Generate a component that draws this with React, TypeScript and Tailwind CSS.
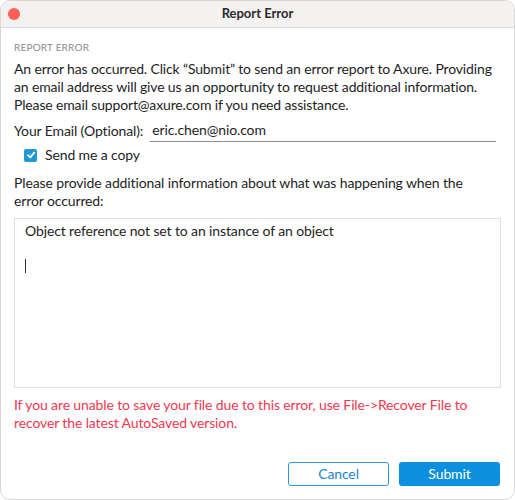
import React from "react";

export default function App() {
  return (
    <div className="w-[515px] h-[500px] bg-white" style={{ fontFamily: "Lato, 'Open Sans', sans-serif" }}>
      <div className="w-[515px] h-[500px] bg-white rounded-[10px] border border-[#d8d8d8] overflow-hidden flex flex-col tracking-[-0.12px]">
        <div className="h-[27px] shrink-0 bg-[#f3f2f1] border-b border-[#dcdcdc] flex items-center relative">
          <div className="absolute left-[7px] top-[7px] w-[12px] h-[12px] rounded-full bg-[#fe5f57]" />
          <div className="w-full text-center text-[13px] font-bold text-[#2b2b2b] tracking-normal">Report Error</div>
        </div>
        <div className="flex flex-col px-[13px] pt-[12px]">
          <div className="text-[10px] tracking-[0.2px] text-[#8a8a8a] leading-[14px]">REPORT ERROR</div>
          <p className="mt-[6px] w-[489px] text-[14px] leading-[18px] text-[#1e1e1e] tracking-[-0.15px]">
            An error has occurred. Click “Submit” to send an error report to Axure. Providing an email address will give us an opportunity to request additional information. Please email support@axure.com if you need assistance.
          </p>
          <div className="mt-[7px] flex items-end text-[14px] text-[#1e1e1e]">
            <span className="leading-[18px] pb-[2px]">Your Email (Optional):</span>
            <div className="ml-[7px] w-[346px] border-b border-[#8e8e8e] leading-[18px] pb-[2px] pl-[2px]">eric.chen@nio.com</div>
          </div>
          <div className="mt-[4px] ml-[10px] flex items-center text-[14px] text-[#1e1e1e]">
            <div className="w-[13px] h-[13px] bg-[#1f98d4] rounded-[2px] flex items-center justify-center">
              <svg width="10" height="10" viewBox="0 0 10 10">
                <path d="M2 5.2 L4.2 7.3 L8.2 2.6" stroke="white" strokeWidth="1.8" fill="none" strokeLinecap="round" strokeLinejoin="round" />
              </svg>
            </div>
            <span className="ml-[8px] leading-[18px]">Send me a copy</span>
          </div>
          <p className="mt-[10px] w-[476px] text-[14px] leading-[18px] text-[#1e1e1e]">
            Please provide additional information about what was happening when the error occurred:
          </p>
          <div className="mt-[8px] w-[487px] h-[170px] border border-[#dedede] px-[10px] pt-[3px] text-[14px] leading-[18px] text-[#1e1e1e]">
            <div>Object reference not set to an instance of an object</div>
            <div className="mt-[19px] w-px h-[14px] bg-[#333]" />
          </div>
          <p className="mt-[8px] w-[476px] text-[14px] leading-[18px] text-[#f0384f]">
            If you are unable to save your file due to this error, use File-&gt;Recover File to recover the latest AutoSaved version.
          </p>
          <div className="mt-[30px] flex justify-end gap-[10px] pr-[1px]">
            <button className="w-[101px] h-[24px] rounded-[3px] border border-[#2d96dd] bg-white text-[#1b84cc] text-[14px] leading-none">Cancel</button>
            <button className="w-[101px] h-[24px] rounded-[3px] bg-[#0d8fe0] text-white text-[14px] leading-none">Submit</button>
          </div>
        </div>
      </div>
    </div>
  );
}
